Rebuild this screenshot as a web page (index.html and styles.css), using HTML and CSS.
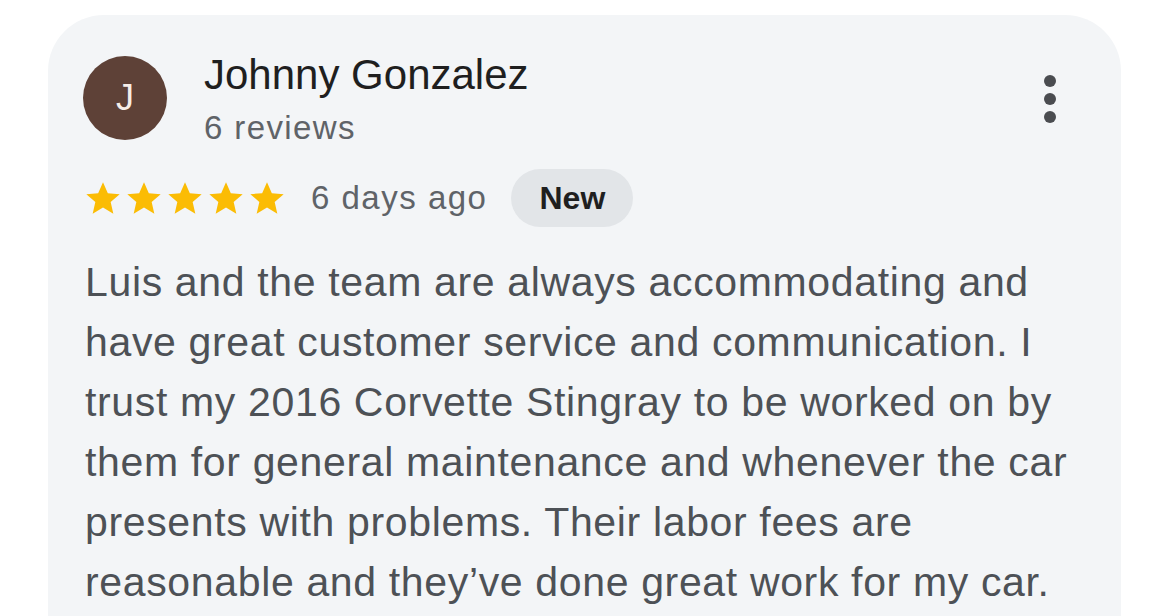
FILE: index.html
```html
<!DOCTYPE html>
<html lang="en">
<head>
    <meta charset="UTF-8">
    <title>Review</title>
    <link rel="stylesheet" href="styles.css">
</head>
<body>
    <div class="card">
        <div class="review-head">
            <div class="avatar">J</div>
            <div class="author">
                <div class="author-name">Johnny Gonzalez</div>
                <div class="author-meta">6 reviews</div>
            </div>
            <button class="more-btn" aria-label="More">
                <svg width="14" height="50" viewBox="0 0 14 50">
                    <circle cx="7" cy="7" r="6" fill="#4a4c50"/>
                    <circle cx="7" cy="25" r="6" fill="#4a4c50"/>
                    <circle cx="7" cy="43" r="6" fill="#4a4c50"/>
                </svg>
            </button>
        </div>
        <div class="rating-row">
            <div class="stars">
                <svg class="star" viewBox="0 0 24 24"><path d="M12 2.5l2.9 6.6 7.1.6-5.4 4.7 1.6 7-6.2-3.7-6.2 3.7 1.6-7L2 9.7l7.1-.6z"/></svg>
                <svg class="star" viewBox="0 0 24 24"><path d="M12 2.5l2.9 6.6 7.1.6-5.4 4.7 1.6 7-6.2-3.7-6.2 3.7 1.6-7L2 9.7l7.1-.6z"/></svg>
                <svg class="star" viewBox="0 0 24 24"><path d="M12 2.5l2.9 6.6 7.1.6-5.4 4.7 1.6 7-6.2-3.7-6.2 3.7 1.6-7L2 9.7l7.1-.6z"/></svg>
                <svg class="star" viewBox="0 0 24 24"><path d="M12 2.5l2.9 6.6 7.1.6-5.4 4.7 1.6 7-6.2-3.7-6.2 3.7 1.6-7L2 9.7l7.1-.6z"/></svg>
                <svg class="star" viewBox="0 0 24 24"><path d="M12 2.5l2.9 6.6 7.1.6-5.4 4.7 1.6 7-6.2-3.7-6.2 3.7 1.6-7L2 9.7l7.1-.6z"/></svg>
            </div>
            <span class="review-date">6 days ago</span>
            <span class="badge">New</span>
        </div>
        <p class="review-text">Luis and the team are always accommodating and have great customer service and communication. I trust my 2016 Corvette Stingray to be worked on by them for general maintenance and whenever the car presents with problems. Their labor fees are reasonable and they’ve done great work for my car.</p>
    </div>
</body>
</html>
```

FILE: styles.css
```css
body {
    margin: 0;
    background: #ffffff;
    font-family: "Liberation Sans", Arial, sans-serif;
    overflow: hidden;
}

.card {
    margin: 15px 0 0 48px;
    width: 1073px;
    height: 700px;
    box-sizing: border-box;
    padding: 41px 30px 0 35px;
    background: #f3f5f7;
    border-radius: 56px;
}

.review-head {
    display: flex;
    align-items: flex-start;
}

.avatar {
    width: 84px;
    height: 84px;
    border-radius: 50%;
    background: #5e4137;
    color: #f6ede8;
    font-size: 36px;
    display: flex;
    align-items: center;
    justify-content: center;
    flex-shrink: 0;
}

.author {
    margin-left: 37px;
    flex: 1;
}

.author-name {
    font-size: 42px;
    line-height: 50px;
    color: #1f1f1f;
    margin-top: -6px;
}

.author-meta {
    font-size: 33px;
    line-height: 44px;
    letter-spacing: 1.4px;
    color: #5f6368;
    margin-top: 6px;
}

.more-btn {
    background: none;
    border: none;
    padding: 0;
    margin: 18px 34px 0 0;
    width: 14px;
    height: 50px;
}

.rating-row {
    display: flex;
    align-items: center;
    margin-top: 19px;
}

.stars {
    display: flex;
    gap: 1px;
}

.star {
    width: 40px;
    height: 40px;
    fill: #fbbc04;
}

.review-date {
    font-size: 33px;
    letter-spacing: 1.5px;
    color: #5f6368;
    margin-left: 24px;
}

.badge {
    margin-left: 24px;
    height: 58px;
    padding: 0 28px;
    border-radius: 29px;
    background: #e2e5e8;
    color: #1f1f1f;
    font-size: 32px;
    font-weight: bold;
    display: flex;
    align-items: center;
}

.review-text {
    margin: 25px 0 0 2px;
    font-size: 41px;
    line-height: 60px;
    letter-spacing: 0.65px;
    color: #4d5156;
}
```
